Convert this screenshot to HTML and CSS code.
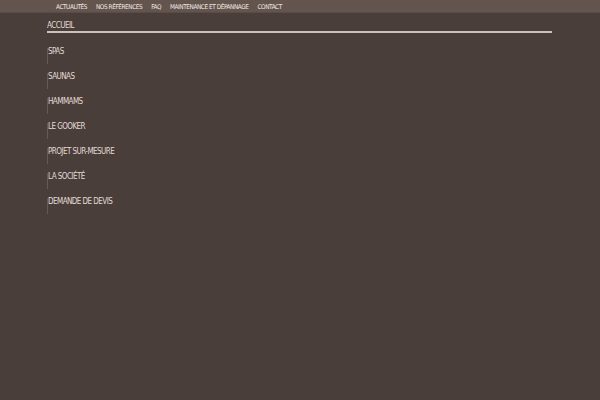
FILE: index.html
```html
<!DOCTYPE html>
<html lang="fr">
<head>
<meta charset="utf-8">
<title>Menu</title>
<link rel="stylesheet" href="styles.css">
</head>
<body>
<header class="topbar">
  <nav class="topnav">
    <a href="#">ACTUALITÉS</a>
    <a href="#">NOS RÉFÉRENCES</a>
    <a href="#">FAQ</a>
    <a href="#">MAINTENANCE ET DÉPANNAGE</a>
    <a href="#">CONTACT</a>
  </nav>
</header>
<main class="wrap">
  <ul class="menu">
    <li class="item active"><a href="#">ACCUEIL</a></li>
    <li class="item"><a href="#">SPAS</a></li>
    <li class="item"><a href="#">SAUNAS</a></li>
    <li class="item"><a href="#">HAMMAMS</a></li>
    <li class="item"><a href="#">LE GOOKER</a></li>
    <li class="item"><a href="#">PROJET SUR-MESURE</a></li>
    <li class="item"><a href="#">LA SOCIÉTÉ</a></li>
    <li class="item"><a href="#">DEMANDE DE DEVIS</a></li>
  </ul>
</main>
</body>
</html>
```
FILE: styles.css
```css
html, body {
  margin: 0;
  padding: 0;
  background: #4a3e3a;
  height: 100%;
}
body {
  font-family: "DejaVu Sans Condensed", "DejaVu Sans", sans-serif;
  color: #e2dad5;
}
a {
  color: inherit;
  text-decoration: none;
}
.topbar {
  background: #63554e;
  height: 12px;
  border-bottom: 1px solid #594c46;
}
.topnav {
  box-sizing: border-box;
  display: flex;
  gap: 9px;
  padding-left: 56px;
  padding-top: 1px;
  height: 12px;
  align-items: center;
  font-size: 6.4px;
  letter-spacing: -0.42px;
  color: #efe8e3;
}
.wrap {
  margin-left: 47px;
  width: 505px;
}
.menu {
  list-style: none;
  margin: 0;
  padding: 0;
  display: flex;
  flex-direction: column;
  font-size: 8px;
  letter-spacing: -0.55px;
}
.item {
  box-sizing: border-box;
  height: 25px;
  padding-top: 15px;
}
.item a {
  display: block;
  height: 16px;
  line-height: 8px;
  border-left: 1px solid #675a54;
}
.item.active {
  height: 20px;
  padding-top: 9px;
}
.item.active a {
  height: 9px;
  border-left: none;
  border-bottom: 2px solid #cbc2bc;
}
```
